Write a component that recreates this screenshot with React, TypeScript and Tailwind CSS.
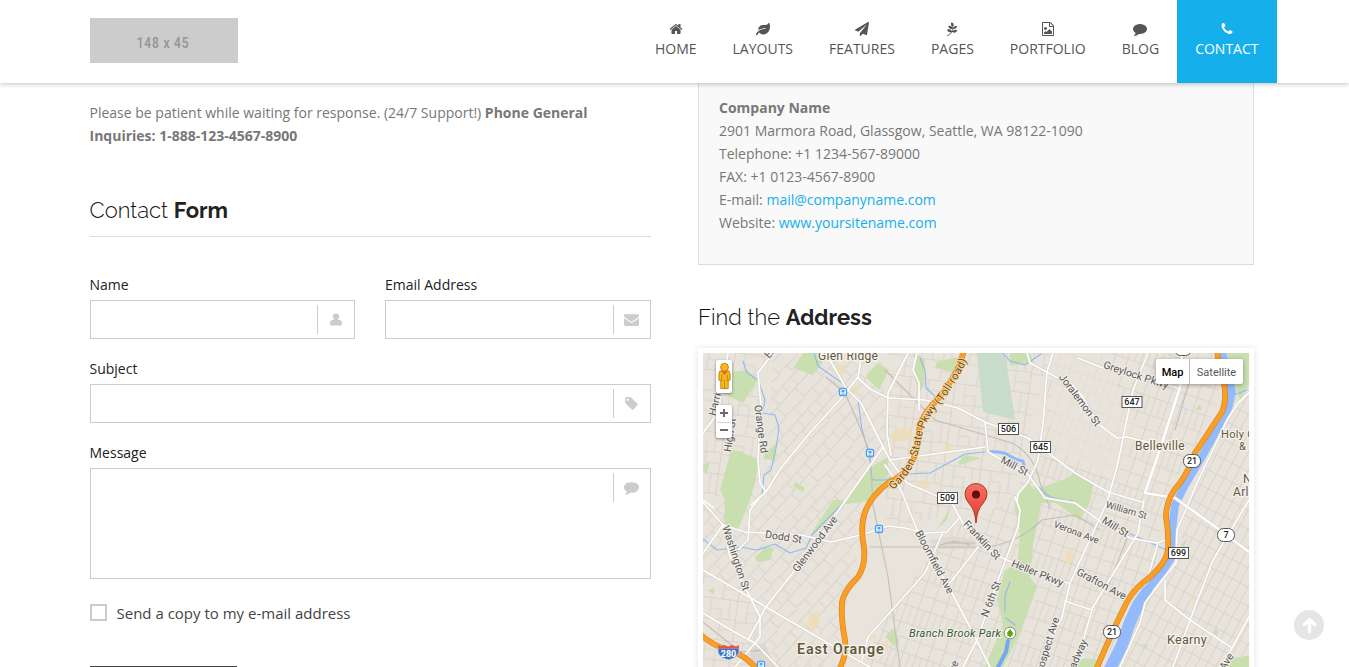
import type { ReactNode } from "react";
import { FaLeaf, FaPaperPlane, FaPagelines } from "react-icons/fa";

const PATHS = {
  home: "M1472 992v480q0 26-19 45t-45 19h-384v-384h-256v384h-384q-26 0-45-19t-19-45v-480q0-1 .5-3t.5-3l575-474 575 474q1 2 1 6zm223-69l-62 74q-8 9-21 11h-3q-13 0-21-7l-692-577-692 577q-12 8-24 7-13-2-21-11l-62-74q-8-10-7-23.5t11-21.5l719-599q32-26 76-26t76 26l244 204v-195q0-14 9-23t23-9h192q14 0 23 9t9 23v408l219 182q10 8 11 21.5t-7 23.5z",
  fileImage:
    "M1596 380q28 28 48 76t20 88v1152q0 40-28 68t-68 28h-1344q-40 0-68-28t-28-68v-1600q0-40 28-68t68-28h896q40 0 88 20t76 48zm-444-244v376h376q-10-29-22-41l-313-313q-12-12-41-22zm384 1528v-1024h-416q-40 0-68-28t-28-68v-416h-768v1536h1280zm-128-448v320h-1024v-192l192-192 128 128 384-384zm-832-192q-80 0-136-56t-56-136 56-136 136-56 136 56 56 136-56 136-136 56z",
  comment:
    "M1792 896q0 174-120 321.5t-326 233-450 85.5q-70 0-145-8-198 175-460 242-49 14-114 22-17 2-30.5-9t-17.5-29v-1q-3-4-.5-12t2-10 4.5-9.5l6-9 7-8.5 8-9q7-8 31-34.5t34.5-38 31-39.5 32.5-51 27-59 26-76q-157-89-247.5-220t-90.5-281q0-174 120-321.5t326-233 450-85.5 450 85.5 326 233 120 321.5z",
  phone:
    "M1600 1240q0 27-10 70.5t-21 68.5q-21 50-122 106-94 51-186 51-27 0-53-3.5t-57.5-12.5-47-14.5-55.5-20.5-49-18q-98-35-175-83-127-79-264-216t-216-264q-48-77-83-175-3-9-18-49t-20.5-55.5-14.5-47-12.5-57.5-3.5-53q0-92 51-186 56-101 106-122 25-11 68.5-21t70.5-10q14 0 21 3 18 6 53 76 11 19 30 54t35 63.5 31 53.5q3 4 17.5 25t21.5 35.5 7 28.5q0 20-28.5 50t-62 55-62 53-28.5 46q0 9 5 22.5t8.5 20.5 14 24 11.5 19q76 137 174 235t235 174q2 1 19 11.5t24 14 20.5 8.5 22.5 5q18 0 46-28.5t53-62 55-62 50-28.5q14 0 28.5 7t35.5 21.5 25 17.5q25 15 53.5 31t63.5 35 54 30q70 35 76 53 3 7 3 21z",
  user: "M830 180c220 0 385 150 385 350 0 150-70 260-160 330v60c260 0 390 60 450 190 40 85 50 190 50 290 0 140-80 220-220 220H325c-140 0-220-80-220-220 0-100 10-205 50-290 60-130 190-190 450-190v-60c-90-70-160-180-160-330 0-200 165-350 385-350z",
  envelope:
    "M1792 710v794q0 66-47 113t-113 47h-1472q-66 0-113-47t-47-113v-794q44 49 101 87 362 246 497 345 57 42 92.5 65.5t94.5 48 110 24.5h2q51 0 110-24.5t94.5-48 92.5-65.5q170-123 498-345 57-39 100-87zm0-294q0 79-49 151t-122 123q-376 261-468 325-10 7-42.5 31t-54 38.5-52 32.5-57.5 27-50 9h-2q-23 0-50-9t-57.5-27-52-32.5-54-38.5-42.5-31q-91-64-262-182.5t-205-142.5q-62-42-117-115.5t-55-136.5q0-78 41.5-130t118.5-52h1472q65 0 112.5 47t47.5 113z",
  tag: "M576 448q0-53-37.5-90.5t-90.5-37.5-90.5 37.5-37.5 90.5 37.5 90.5 90.5 37.5 90.5-37.5 37.5-90.5zm1067 576q0 53-37 90l-491 492q-39 37-91 37-53 0-90-37l-715-716q-38-37-64.5-101t-26.5-117v-416q0-52 38-90t90-38h416q53 0 117 26.5t102 64.5l715 714q37 39 37 91z",
};

function NavIcon({ d }: { d: string }) {
  return (
    <svg viewBox="0 0 1792 1792" className="h-[14px] w-[14px]" fill="currentColor">
      <path d={d} />
    </svg>
  );
}

const NAV: { label: string; icon: ReactNode; active?: boolean }[] = [
  { label: "HOME", icon: <NavIcon d={PATHS.home} /> },
  { label: "LAYOUTS", icon: <FaLeaf className="h-[14px] w-[14px]" /> },
  { label: "FEATURES", icon: <FaPaperPlane className="h-[14px] w-[14px]" /> },
  { label: "PAGES", icon: <FaPagelines className="h-[14px] w-[14px]" /> },
  { label: "PORTFOLIO", icon: <NavIcon d={PATHS.fileImage} /> },
  { label: "BLOG", icon: <NavIcon d={PATHS.comment} /> },
  { label: "CONTACT", icon: <NavIcon d={PATHS.phone} />, active: true },
];

function Header() {
  return (
    <header className="relative z-10 flex h-[83px] shrink-0 justify-between bg-white pr-[72.5px] pl-[89.5px] shadow-[0_1px_5px_rgba(0,0,0,0.25)]">
      <div className="mt-[18px] flex h-[45px] w-[148px] items-center justify-center bg-[#ccc]">
        <span className="scale-x-[0.8] pt-[5px] pr-px font-['Roboto',sans-serif] text-[15px] font-semibold tracking-[1px] whitespace-nowrap text-[#969696]">
          148 x 45
        </span>
      </div>
      <nav className="flex">
        {NAV.map((n) => (
          <a
            key={n.label}
            className={`flex h-[83px] flex-col items-center px-[18px] pt-[22px] text-[14px] leading-[20px] ${
              n.active ? "bg-[#15afec] text-white" : "text-[#555]"
            }`}
          >
            <span className="flex h-[14px] items-center">{n.icon}</span>
            <span className="mt-[3px]">{n.label}</span>
          </a>
        ))}
      </nav>
    </header>
  );
}

function Field({ label, icon, tall }: { label: string; icon: string; tall?: boolean }) {
  return (
    <label className="block">
      <span className="block h-[23px] text-[14px] leading-[23px] text-[#222]">{label}</span>
      <span
        className={`mt-1 flex justify-end border border-[#ccc] bg-white pt-1 ${tall ? "h-[111px]" : "h-[39px]"}`}
      >
        <span className="flex h-[29px] w-[37px] items-center justify-center border-l border-[#ccc] text-[#ccc]">
          <svg viewBox="0 0 1792 1792" className="h-[15px] w-[15px]" fill="currentColor">
            <path d={icon} />
          </svg>
        </span>
      </span>
    </label>
  );
}

const GREENS = [
  "793,368 813,375 829,353 803,353",
  "731,372 748,370 758,380 743,403 730,397 723,390",
  "868,373 878,363 889,370 879,390 866,377",
  "731,450 740,451 758,460 755,483 750,500 738,530 724,525 725,500 720,490",
  "765,452 777,443 775,460 764,459",
  "841,505 855,485 874,465 888,457 888,475 873,500",
  "795,482 805,488 803,492 793,486",
  "915,353 925,360 924,385 919,393 913,372",
  "937,362 958,357 953,372 935,368",
  "1010,353 1030,353 1033,362 1010,366",
  "885,432 888,405 889,420 888,440",
  "958,462 965,455 980,458 960,465",
  "811,534 833,500 846,500 833,515 813,535",
  "755,558 764,548 774,547 770,560 757,562",
  "708,590 714,588 714,595",
  "1029,490 1042,487 1068,478 1075,471 1093,485 1090,502 1080,520 1056,503 1035,503",
  "1015,497 1029,483 1042,500 1033,545 1030,577 1037,587 1020,633 1003,667 985,667 1003,625 997,598 1005,570 1018,563 1020,530 1015,510",
  "940,525 950,508 947,520 936,530",
  "885,637 893,628 899,640 898,649",
  "1226,353 1249,353 1249,385 1240,400 1233,380",
  "1195,410 1200,404 1202,410",
  "1211,447 1216,440 1214,450",
  "1181,545 1188,537 1184,548",
  "1142,644 1148,645 1146,649",
  "1213,632 1218,629 1217,636",
  "1229,660 1249,655 1249,667 1222,667",
  "1070,664 1085,658 1098,660 1095,667 1070,667",
  "703,465 710,462 706,475",
];

const TANS = [
  "892,432 905,427 912,430 910,440 892,442",
  "945,444 951,444 951,450 945,450",
  "915,481 930,481 928,488 918,487",
  "848,390 858,385 857,395 850,395",
  "836,365 846,365 843,377 837,375",
  "809,615 818,610 820,622 811,633 807,628",
  "1065,551 1073,550 1072,563 1065,563",
  "1022,551 1026,550 1029,560 1024,562",
  "1203,570 1208,568 1206,575",
  "1188,597 1194,595 1195,601",
  "870,635 876,634 874,642",
  "880,645 888,640 888,654",
];

const ROADS = [
  "M751 505L766 492 781 468 808 435 844 395 858 377 862 353",
  "M826 353L846 388 861 403 883 447 890 460 907 483 928 492 945 500",
  "M858 378L870 389 888 398 925 400 958 408 985 422 1028 438 1075 473 1108 492 1142 502",
  "M883 447L855 487 821 535 795 570 766 607 748 640",
  "M773 353L758 373 761 407 758 460 760 483 766 492",
  "M728 353L718 413 703 433",
  "M703 502L723 525 730 557 748 593 760 617 760 637 735 667",
  "M703 503L703 500 714 508",
  "M703 570L766 607 845 653 870 667",
  "M703 613L731 630 755 643 778 667",
  "M723 525L745 532 801 535 831 542 861 535 888 526 905 528 925 533 947 532 960 517",
  "M758 500L750 510 748 540 738 550",
  "M723 525L703 553",
  "M885 465Q900 485 905 500L918 532 952 593 973 633 990 667",
  "M945 490L953 505 965 527 995 555 1012 562 1068 583",
  "M1015 497L1020 510 1018 527 998 580 977 640 963 667",
  "M1017 500L1018 494 1028 482 1038 460 1043 423 1047 372 1053 353",
  "M1027 353L1030 363 1058 378 1072 384 1083 397 1097 423 1117 438 1127 437 1180 450",
  "M1078 358L1103 368 1178 388",
  "M1148 353L1133 390 1117 467 1107 502 1070 583 1062 617 1038 667",
  "M1187 507L1177 530 1176 563 1162 580 1145 603 1140 623 1120 667",
  "M1249 393L1238 403 1227 420 1197 483 1187 507",
  "M1165 580L1165 600 1190 620 1232 648",
  "M1249 617L1232 648 1220 667",
  "M1249 500L1213 560 1190 620 1173 667",
  "M1144 500L1138 533 1093 607 1075 667",
  "M1065 601L1092 610",
  "M985 422L988 452 1002 460 1027 473 1045 498 1075 503 1103 523 1130 538 1157 543 1165 540",
  "M890 460L985 447",
  "M908 353L888 393 887 433 891 455",
  "M917 353L913 370 919 383 919 410",
  "M978 547L950 583",
  "M943 532L925 573 885 618 868 637 862 660",
  "M1158 543L1147 580",
];

const RAILS = [
  "M826 377L845 393 857 420 870 453 873 505 888 577 900 667",
  "M885 370L915 400 935 420 1012 443Q1035 455 1040 483L1050 508",
  "M870 547L988 547Q1020 542 1042 520L1075 515 1100 530",
  "M940 545L955 541 970 545M945 543L975 543",
  "M703 622L740 652 765 650",
  "M1175 430L1190 380M1107 590L1130 530",
];

const CREEKS = [
  "M743 361L747 373 758 380 765 400 763 410M763 413L775 415 779 428 776 448 771 470 764 475 762 495",
  "M814 353L818 366 845 385 858 400 862 430 869 453 872 480 885 480 905 474 930 473 965 454 985 452",
  "M920 358L925 370 926 388 936 397",
  "M962 367L957 375",
  "M1003 353L1010 361 1025 365 1041 354",
  "M703 539L717 550 740 547 757 550 775 544 790 553 806 548 812 535 845 501",
  "M1027 470L1037 486 1050 497 1075 503M1070 500L1100 520 1140 538 1166 550",
  "M1010 582L1005 595 1005 612M1006 618L1015 625",
  "M1234 395L1247 390",
];

function RouteBox({ x, y, n }: { x: number; y: number; n: string }) {
  return (
    <g>
      <rect x={x - 10} y={y - 5.5} width="20" height="11" fill="#fff" stroke="#555" />
      <text x={x} y={y + 3.3} textAnchor="middle" fontSize="9" fontWeight="500" fill="#222">
        {n}
      </text>
    </g>
  );
}

function RouteOval({ x, y, n }: { x: number; y: number; n: string }) {
  return (
    <g>
      <rect x={x - 8.5} y={y - 6.5} width="17" height="13" rx="6" fill="#fff" stroke="#555" />
      <text x={x} y={y + 3.3} textAnchor="middle" fontSize="9" fontWeight="500" fill="#222">
        {n}
      </text>
    </g>
  );
}

function Station({ x, y }: { x: number; y: number }) {
  return (
    <g>
      <rect x={x - 3.5} y={y - 3.5} width="7" height="7" rx="1.5" fill="#fff" stroke="#4a9ff0" strokeWidth="1.4" />
      <rect x={x - 1.5} y={y - 2} width="3" height="2.4" fill="#4a9ff0" />
      <path d={`M${x - 1.5} ${y + 2}h3`} stroke="#4a9ff0" strokeWidth="1" />
    </g>
  );
}

function StreetLabel({ x, y, r, size = 10.5, children }: { x: number; y: number; r: number; size?: number; children: string }) {
  return (
    <text
      transform={`translate(${x} ${y}) rotate(${r})`}
      textAnchor="middle"
      dominantBaseline="central"
      fontSize={size}
      fill="#555"
      stroke="#f3f0ea"
      strokeWidth="2"
      paintOrder="stroke"
    >
      {children}
    </text>
  );
}

function Place({ x, y, size, weight, spacing = 0.3, children }: { x: number; y: number; size: number; weight?: number; spacing?: number; children: string }) {
  return (
    <text x={x} y={y} fontSize={size} fontWeight={weight} fill="#625840" stroke="#f6f3ec" strokeWidth="2.4" paintOrder="stroke" letterSpacing={spacing}>
      {children}
    </text>
  );
}

function CityMap() {
  return (
    <svg viewBox="703 353 546 316" className="block h-[316px] w-[546px]" fontFamily="Roboto, sans-serif">
      <defs>
        <pattern id="gridA" width="27" height="34" patternUnits="userSpaceOnUse" patternTransform="rotate(-48)">
          <path d="M0 .5H27M0 12L27 14M0 24H27M.5 0V13M12 13V24M20 24V34M5 24V34" stroke="#d5d0c7" strokeWidth=".8" fill="none" />
        </pattern>
        <pattern id="gridB" width="13" height="46" patternUnits="userSpaceOnUse" patternTransform="rotate(19)">
          <path d="M0 .5H13M.5 0V46M7 0V18M0 18H13M0 33L13 32" stroke="#d5d0c7" strokeWidth=".8" fill="none" />
        </pattern>
        <pattern id="gridC" width="9" height="17" patternUnits="userSpaceOnUse" patternTransform="rotate(28)">
          <path d="M0 .5H9M.5 0V17" stroke="#d5d0c7" strokeWidth=".8" fill="none" />
        </pattern>
        <pattern id="gridD" width="37" height="41" patternUnits="userSpaceOnUse" patternTransform="rotate(8)">
          <path d="M0 .5H37M.5 0V41M11 0V22M0 22L37 20M22 20V41M11 11H22V20M22 31H37M30 0V20" stroke="#d5d0c7" strokeWidth=".8" fill="none" />
        </pattern>
        <linearGradient id="pin" x1="0" y1="0" x2="0" y2="1">
          <stop offset="0" stopColor="#fb7064" />
          <stop offset="1" stopColor="#de3b30" />
        </linearGradient>
        <path id="gsp" d="M890 487Q912 470 917 440Q920 420 936 403Q954 380 966 353" />
      </defs>
      <rect x="703" y="353" width="546" height="316" fill="#e8e4db" />
      <path d="M773 353H880L888 430 883 447 870 490 850 590 835 669H745L766 607 703 570V505L766 492Z" fill="url(#gridA)" />
      <path d="M703 353H773L758 373 761 480 703 502ZM703 572L766 607 748 669H703Z" fill="url(#gridD)" />
      <path d="M888 353H1050L1010 500 885 530Z" fill="url(#gridD)" />
      <path d="M1050 353H1212L1220 400 1165 500 1155 570 1100 669H862L885 618 950 530 1010 500 1045 440Z" fill="url(#gridB)" />
      <path d="M1232 400L1249 390V669H1115L1145 603 1178 560 1187 507Z" fill="url(#gridC)" />
      <path d="M1052 353H1100L1140 430 1110 480 1050 445Z" fill="#e8e4db" opacity=".6" />
      <path d="M930 540L952 536 975 540 972 549 935 549Z" fill="#dedad2" />
      <path d="M750 645L765 643 775 667H752Z" fill="#dcd7cf" />
      {TANS.map((p) => (
        <polygon key={p} points={p} fill="#eddcb4" opacity=".8" />
      ))}
      {GREENS.map((p) => (
        <polygon key={p} points={p} fill="#c9dfaf" />
      ))}
      <polygon points="977,353 1005,353 1015,420 983,412" fill="#c8ddc9" />
      <g fill="none" strokeLinejoin="round" strokeLinecap="round">
        {CREEKS.map((d) => (
          <path key={d} d={d} stroke="#8db9f4" strokeWidth="1.1" />
        ))}
        <path d="M988 452Q1002 451 1010 456T1023 461L1025 471" stroke="#8fb8fb" strokeWidth="3" />
        <path d="M1008 641L1006 652 998 667" stroke="#74a8f5" strokeWidth="4" />
        <path d="M1222 353L1229 380 1232 392 1228 408 1212 438 1200 460 1185 485 1175 505 1172 530 1171 558 1160 575 1147 590 1137 603 1130 622 1122 645 1108 669" stroke="#92bafd" strokeWidth="8" />
        <path d="M1147 592L1137 607 1130 622 1122 645 1110 669" stroke="#92bafd" strokeWidth="12" />
        {RAILS.map((d) => (
          <path key={d} d={d} stroke="#c2beb8" strokeWidth="1.1" />
        ))}
        {ROADS.map((d) => (
          <path key={d} d={d} stroke="#d6d0c6" strokeWidth="2.7" />
        ))}
        {ROADS.map((d) => (
          <path key={d} d={d} stroke="#fff" strokeWidth="1.7" />
        ))}
        <path d="M1182 353L1180 387 1162 443 1145 493 1175 498 1217 528 1249 552" stroke="#d6d0c6" strokeWidth="3.6" />
        <path d="M1182 353L1180 387 1162 443 1145 493 1175 498 1217 528 1249 552" stroke="#fff" strokeWidth="2.7" />
        {[
          "M964 350Q961 365 953 377Q945 392 935 402Q921 416 919 430Q918 455 909 466Q903 476 888 483Q866 500 863 520Q861 532 864 548Q866 565 858 577Q843 592 842 603Q841 620 845 640Q847 655 839 670",
          "M1217 350Q1219 370 1224 383Q1227 400 1222 412L1195 453Q1188 472 1180 483Q1166 498 1166 517Q1169 535 1168 550Q1166 563 1150 577Q1135 588 1128 600Q1115 625 1096 670",
          "M701 635Q715 647 729 650Q745 655 757 669",
        ].map((d) => (
          <g key={d}>
            <path d={d} stroke="#d9862b" strokeWidth="5.8" />
            <path d={d} stroke="#fb9f24" strokeWidth="4.4" />
          </g>
        ))}
      </g>

      <Station x={843} y={392} />
      <Station x={870} y={453} />
      <Station x={879} y={529} />
      <Station x={761} y={665} />

      <StreetLabel x={717} y={396} r={-76}>Harrison</StreetLabel>
      <StreetLabel x={730} y={435} r={-82}>High St</StreetLabel>
      <StreetLabel x={761} y={429} r={82}>Orange Rd</StreetLabel>
      <StreetLabel x={772} y={350} r={-50}>Elm</StreetLabel>
      <StreetLabel x={783.5} y={537} r={9}>Dodd St</StreetLabel>
      <StreetLabel x={815} y={544} r={-53}>Glenwood Ave</StreetLabel>
      <StreetLabel x={736} y={558} r={72}>Washington St</StreetLabel>
      <StreetLabel x={934.5} y={562} r={62}>Bloomfield Ave</StreetLabel>
      <StreetLabel x={982} y={540} r={47}>Franklin St</StreetLabel>
      <StreetLabel x={1014.5} y={466} r={28}>Mill St</StreetLabel>
      <StreetLabel x={1037.5} y={573} r={22}>Heller Pkwy</StreetLabel>
      <StreetLabel x={991} y={599} r={-69}>N 6th St</StreetLabel>
      <StreetLabel x={1047} y={647} r={-73}>Prospect Ave</StreetLabel>
      <StreetLabel x={1075} y={661} r={-66}>Broadway</StreetLabel>
      <StreetLabel x={948} y={680} r={-68}>Park Ave</StreetLabel>
      <StreetLabel x={1080} y={400} r={53}>Joralemon St</StreetLabel>
      <StreetLabel x={1136} y={375} r={18}>Greylock Pkwy</StreetLabel>
      <StreetLabel x={1126.5} y={510} r={16} size={9.5}>William St</StreetLabel>
      <StreetLabel x={1115.5} y={527} r={32}>Mill St</StreetLabel>
      <StreetLabel x={1076.500} y={532} r={21} size={9.5}>Verona Ave</StreetLabel>
      <StreetLabel x={1101.500} y={584} r={28}>Grafton Ave</StreetLabel>
      <StreetLabel x={1217} y={676} r={-57}>Kearny Ave</StreetLabel>
      <text fontSize="11" fill="#6a4a1c" stroke="#f9d9a2" strokeWidth="1.8" paintOrder="stroke" dominantBaseline="central">
        <textPath href="#gsp" textLength="150">Garden State Pkwy (Toll road)</textPath>
      </text>

      <Place x={818} y={359.5} size={12}>Glen Ridge</Place>
      <Place x={1135} y={449.5} size={12}>Belleville</Place>
      <Place x={1167} y={643.5} size={12.5}>Kearny</Place>
      <Place x={797} y={653.5} size={14.3} weight={600} spacing={0.9}>East Orange</Place>
      <Place x={1221} y={438} size={11}>Holy Cross</Place>
      <Place x={1239} y={450} size={11}>&amp;</Place>
      <Place x={1243} y={483} size={12}>N</Place>
      <Place x={1233} y={496} size={12}>Arlington</Place>
      <text x="909" y="636.5" fontSize="11" fontStyle="italic" fill="#38592f" stroke="#f3f0ea" strokeWidth="2" paintOrder="stroke" textLength="92">
        Branch Brook Park
      </text>
      <circle cx="1010" cy="633" r="5.8" fill="#fff" stroke="#8f8f80" />
      <path d="M1010 629.5l3 4h-1.5l1 2h-2v1.500h-1v-1.500h-2l1-2h-1.500z" fill="#58a611" stroke="#58a611" strokeWidth=".8" />

      <RouteBox x={1132} y={402} n="647" />
      <RouteBox x={1008.5} y={429} n="506" />
      <RouteBox x={1040.5} y={447} n="645" />
      <RouteBox x={947.5} y={498} n="509" />
      <RouteBox x={1178.5} y={553} n="699" />
      <RouteOval x={1192} y={461} n="21" />
      <RouteOval x={1226} y={535} n="7" />
      <RouteOval x={1112} y={632} n="21" />
      <rect x="1174.5" y="342.5" width="17" height="13" rx="6" fill="#fff" stroke="#555" />
      <path d="M718 648H739Q741 657 728.500 660Q716 657 718 648Z" fill="#3f74bd" stroke="#fff" strokeWidth=".6" />
      <path d="M718 645l3 1.500 3-1.500 4 1.500 4-1.500 4 1.500 3-1.500v3.500h-21z" fill="#dd5652" />
      <text x="728.5" y="656.5" textAnchor="middle" fontSize="9" fontWeight="700" fill="#fff">280</text>

      <path d="M976 523Q975 510 969.500 504Q965 499 965 494A11 10.500 0 0 1 987 494Q987 499 982.500 504Q977 510 976 523Z" fill="url(#pin)" stroke="#a52f27" strokeWidth=".9" />
      <circle cx="976" cy="494.500" r="4" fill="#5c110d" />
    </svg>
  );
}

function MapControls() {
  return (
    <>
      <div className="absolute top-[7px] left-[13px] flex h-[33px] w-[16px] items-center justify-center rounded-[2px] bg-white shadow-[0_1px_3px_rgba(0,0,0,0.45)]">
        <svg viewBox="0 0 14 30" className="h-[29px] w-[13px]">
          <g fill="#fdb813" stroke="#ae7610" strokeWidth=".9">
            <path d="M2 9H12L13 12V19H11V28H3V19H1V12Z" />
            <circle cx="7" cy="5" r="4.200" />
          </g>
          <path d="M3.500 9.500H10.500L7 13.500Z" fill="#e65c50" />
          <path d="M7 19V28M4 13V20M10 13V20" stroke="#ae7610" strokeWidth=".8" />
        </svg>
      </div>
      <div className="absolute top-[52px] left-[13px] flex h-[33px] w-[16px] items-center rounded-[2px] bg-white shadow-[0_1px_3px_rgba(0,0,0,0.45)]">
        <svg viewBox="0 0 16 33" className="h-[33px] w-[16px]" stroke="#6b6b6b" strokeWidth="2">
          <path d="M4 8H12M8 4V12M4 25H12" />
          <path d="M1 17.500H15" stroke="#d4d4d4" strokeWidth="1" />
        </svg>
      </div>
      <div className="absolute top-[6px] right-[6px] flex h-[25px] rounded-[2px] bg-white font-['Roboto',sans-serif] text-[11px] leading-[27px] shadow-[0_1px_4px_rgba(0,0,0,0.35)]">
        <span className="w-[34px] border-r border-[#bbb] text-center font-medium text-black">Map</span>
        <span className="w-[53px] text-center text-[#565656]">Satellite</span>
      </div>
    </>
  );
}

export default function App() {
  return (
    <div className="relative flex h-[667px] w-full flex-col overflow-hidden bg-white font-['Open_Sans',sans-serif] text-[14px] leading-[23px] text-[#777]">
      <Header />
      <main className="flex gap-[47.5px] pl-[89.5px]">
        <section className="w-[561px] shrink-0 pt-[18px]">
          <p>
            Please be patient while waiting for response. (24/7 Support!) <b>Phone General</b>
            <br />
            <b>Inquiries: 1-888-123-4567-8900</b>
          </p>
          <h2 className="mt-[47px] h-[43px] border-b border-[#ddd] font-['Raleway',sans-serif] text-[22px] leading-[33px] font-light text-[#111]">
            Contact <b className="font-bold text-[#222]">Form</b>
          </h2>
          <form className="mt-[36px] grid grid-cols-2 gap-x-[30px] gap-y-[18px]">
            <Field label="Name" icon={PATHS.user} />
            <Field label="Email Address" icon={PATHS.envelope} />
            <div className="col-span-2">
              <Field label="Subject" icon={PATHS.tag} />
            </div>
            <div className="col-span-2">
              <Field label="Message" icon={PATHS.comment} tall />
            </div>
            <label className="col-span-2 mt-[5px] flex items-center gap-[10px] text-[15px] text-[#444]">
              <span className="-mt-[2px] h-[17px] w-[17px] border-2 border-[#ccc] bg-white" />
              Send a copy to my e-mail address
            </label>
          </form>
          <div className="mt-[41px] h-[40px] w-[147px] bg-[#444]" />
        </section>
        <section className="w-[556px] shrink-0">
          <div className="h-[182px] border border-t-0 border-[#ddd] bg-[#f9f9f9] pt-[13px] pl-5">
            <b>Company Name</b>
            <p>2901 Marmora Road, Glassgow, Seattle, WA 98122-1090</p>
            <p>Telephone: +1 1234-567-89000</p>
            <p>FAX: +1 0123-4567-8900</p>
            <p>
              E-mail: <a className="text-[#15afec]">mail@companyname.com</a>
            </p>
            <p>
              Website: <a className="text-[#15afec]">www.yoursitename.com</a>
            </p>
          </div>
          <h2 className="mt-[36px] h-[47px] font-['Raleway',sans-serif] text-[22px] leading-[33px] font-light text-[#111]">
            Find the <b className="font-bold text-[#222]">Address</b>
          </h2>
          <div className="bg-white p-[5px] shadow-[0_0_6px_rgba(0,0,0,0.12)]">
            <div className="relative h-[316px] overflow-hidden">
              <CityMap />
              <MapControls />
            </div>
          </div>
        </section>
      </main>
      <button className="absolute right-[25px] bottom-[27px] flex h-[30px] w-[30px] items-center justify-center rounded-full bg-[#e5e5e5]">
        <svg viewBox="0 0 16 18" className="h-[17px] w-[15px]" fill="none" stroke="#fff" strokeWidth="3.600" strokeLinecap="round" strokeLinejoin="round">
          <path d="M8 15.500V3M2.500 8L8 2.500 13.500 8" />
        </svg>
      </button>
    </div>
  );
}
